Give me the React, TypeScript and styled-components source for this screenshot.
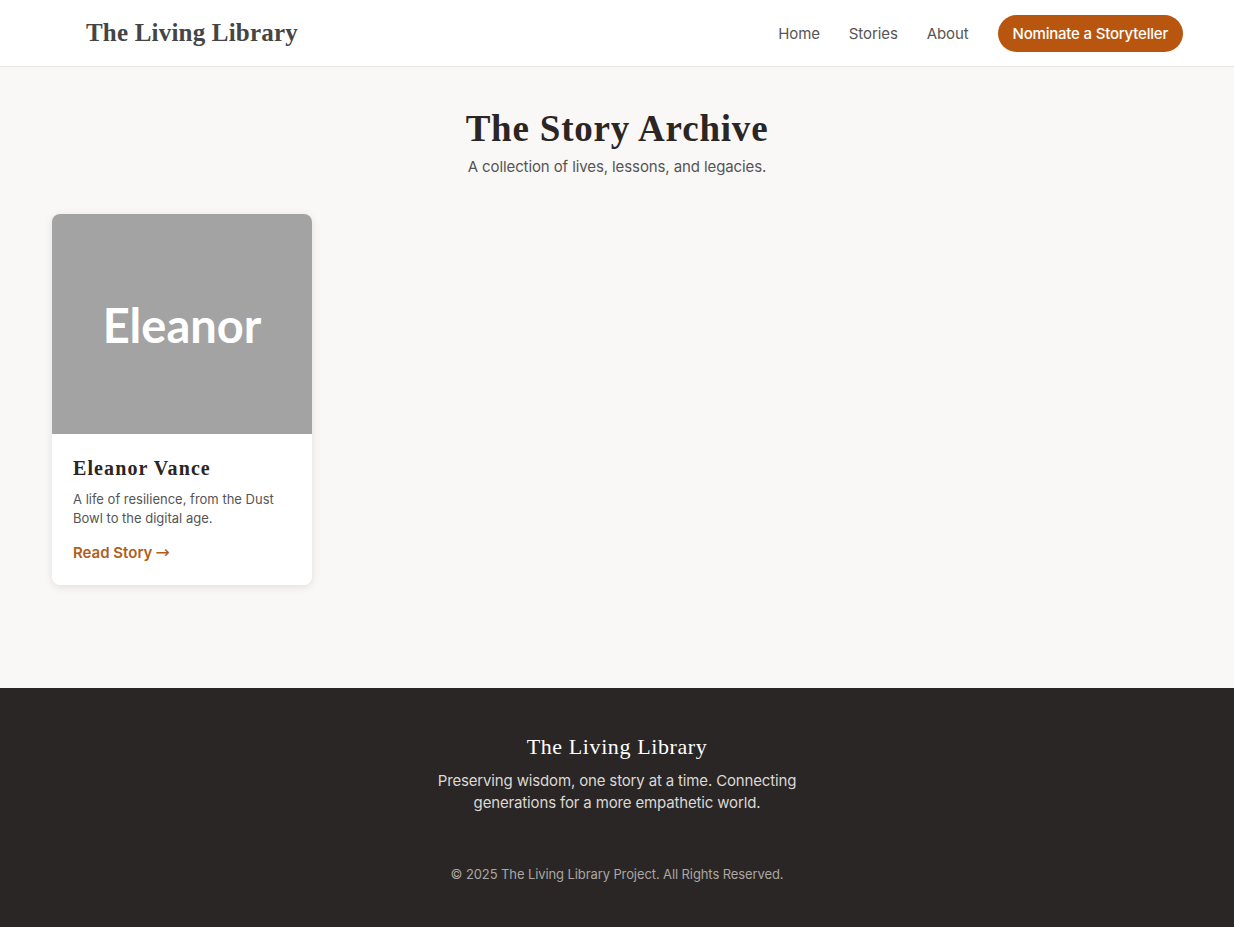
import React from 'react'
import styled, { createGlobalStyle } from 'styled-components'

const GlobalStyle = createGlobalStyle`
  * { box-sizing: border-box; }
  body {
    margin: 0;
    font-family: Inter, "Noto Sans", sans-serif;
    background: #f9f8f6;
    color: #2b2725;
  }
`

const Page = styled.div`
  min-height: 927px;
  display: flex;
  flex-direction: column;
`

const Header = styled.header`
  height: 67px;
  background: #ffffff;
  border-bottom: 1px solid #e9e6e1;
  display: flex;
  align-items: center;
  justify-content: space-between;
  padding: 0 51px 0 86px;
`

const Logo = styled.div`
  font-family: "Liberation Serif", "DejaVu Serif", serif;
  font-weight: 700;
  font-size: 25px;
  letter-spacing: 0.2px;
  color: #454545;
`

const Nav = styled.nav`
  display: flex;
  align-items: center;
  gap: 29px;
`

const NavLink = styled.a`
  font-size: 15px;
  letter-spacing: -0.1px;
  color: #555;
  text-decoration: none;
`

const NominateButton = styled.a`
  background: #b8560f;
  color: #fff;
  font-size: 15px;
  font-weight: 500;
  height: 37px;
  padding: 0 15px;
  border-radius: 999px;
  display: flex;
  align-items: center;
  letter-spacing: -0.2px;
`

const Main = styled.main`
  flex: 1;
  padding: 40px 52px 98px;
`

const Intro = styled.section`
  text-align: center;
  margin-bottom: 38px;
`

const Title = styled.h1`
  margin: 0;
  font-family: "Liberation Serif", "DejaVu Serif", serif;
  font-weight: 700;
  font-size: 37px;
  letter-spacing: 0.8px;
  line-height: 1.2;
  color: #2b2523;
`

const Subtitle = styled.p`
  margin: 6px 0 0;
  font-size: 15px;
  letter-spacing: -0.1px;
  color: #555;
`

const Grid = styled.div`
  display: grid;
  grid-template-columns: repeat(auto-fill, 260px);
  gap: 24px;
`

const Card = styled.article`
  background: #fff;
  border-radius: 8px;
  overflow: hidden;
  box-shadow: 0 2px 8px rgba(0, 0, 0, 0.1);
`

const Cover = styled.div`
  height: 220px;
  background: #a3a3a3;
  display: flex;
  align-items: center;
  justify-content: center;
  color: #fff;
  font-family: Lato, "Open Sans", sans-serif;
  font-weight: 700;
  font-size: 47px;
  padding-top: 1px;
`

const CardBody = styled.div`
  padding: 23px 21px 23px;
`

const CardTitle = styled.h3`
  margin: 0 0 10px;
  font-family: "Liberation Serif", "DejaVu Serif", serif;
  font-weight: 700;
  font-size: 20px;
  letter-spacing: 1.1px;
  color: #2b2523;
`

const CardText = styled.p`
  margin: 0 0 14px;
  font-size: 13px;
  line-height: 19px;
  color: #555;
`

const ReadLink = styled.a`
  font-size: 15px;
  font-weight: 600;
  color: #b05e1c;
  text-decoration: none;
`

const Arrow = styled.span`
  font-family: "DejaVu Sans", sans-serif;
  font-weight: 400;
  font-size: 17px;
  margin-left: 3px;
`

const Footer = styled.footer`
  background: #2a2625;
  padding: 46px 20px 45px;
  text-align: center;
`

const FooterTitle = styled.div`
  font-family: "Liberation Serif", "DejaVu Serif", serif;
  font-size: 22px;
  letter-spacing: 0.6px;
  color: #fff;
`

const FooterText = styled.p`
  margin: 10px auto 0;
  max-width: 370px;
  font-size: 15px;
  line-height: 22px;
  letter-spacing: -0.15px;
  color: #dcd8d4;
`

const Copyright = styled.p`
  margin: 52px 0 0;
  font-size: 13px;
  letter-spacing: -0.1px;
  color: #aaa6a2;
`

type Story = { name: string; cover: string; blurb: string }

const stories: Story[] = [
  {
    name: 'Eleanor Vance',
    cover: 'Eleanor',
    blurb: 'A life of resilience, from the Dust Bowl to the digital age.',
  },
]

const App = () => {
  return (
    <Page>
      <GlobalStyle />
      <Header>
        <Logo>The Living Library</Logo>
        <Nav>
          <NavLink>Home</NavLink>
          <NavLink>Stories</NavLink>
          <NavLink>About</NavLink>
          <NominateButton>Nominate a Storyteller</NominateButton>
        </Nav>
      </Header>
      <Main>
        <Intro>
          <Title>The Story Archive</Title>
          <Subtitle>A collection of lives, lessons, and legacies.</Subtitle>
        </Intro>
        <Grid>
          {stories.map((s, i) => (
            <Card key={`story-${i}`}>
              <Cover>{s.cover}</Cover>
              <CardBody>
                <CardTitle>{s.name}</CardTitle>
                <CardText>{s.blurb}</CardText>
                <ReadLink>
                  Read Story<Arrow>→</Arrow>
                </ReadLink>
              </CardBody>
            </Card>
          ))}
        </Grid>
      </Main>
      <Footer>
        <FooterTitle>The Living Library</FooterTitle>
        <FooterText>
          Preserving wisdom, one story at a time. Connecting generations for a more empathetic world.
        </FooterText>
        <Copyright>© 2025 The Living Library Project. All Rights Reserved.</Copyright>
      </Footer>
    </Page>
  )
}

export default App
